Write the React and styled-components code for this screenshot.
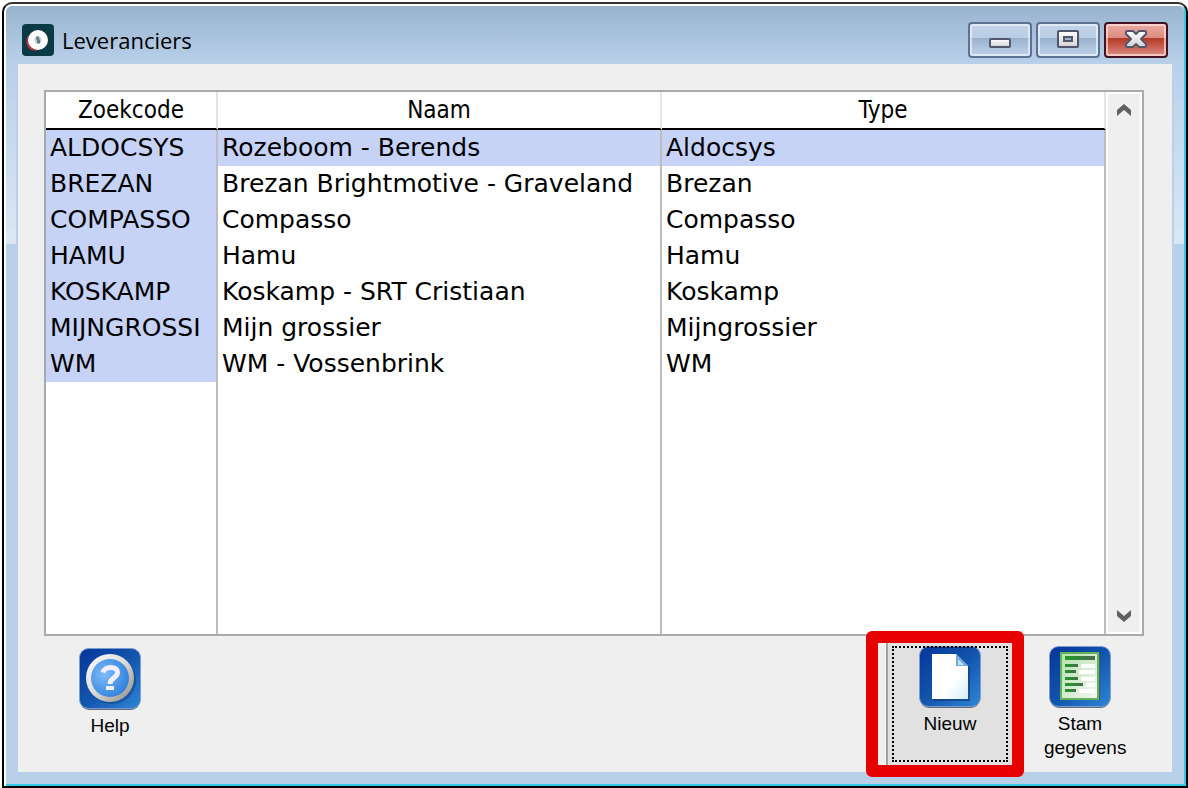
import React, { useState } from 'react'
import styled, { createGlobalStyle } from 'styled-components';

const suppliers = [
    { code: "ALDOCSYS", name: "Rozeboom - Berends", type: "Aldocsys" },
    { code: "BREZAN", name: "Brezan Brightmotive - Graveland", type: "Brezan" },
    { code: "COMPASSO", name: "Compasso", type: "Compasso" },
    { code: "HAMU", name: "Hamu", type: "Hamu" },
    { code: "KOSKAMP", name: "Koskamp - SRT Cristiaan", type: "Koskamp" },
    { code: "MIJNGROSSI", name: "Mijn grossier", type: "Mijngrossier" },
    { code: "WM", name: "WM - Vossenbrink", type: "WM" },
];

function AppLogo() {
    return (
        <svg width="32" height="32" viewBox="0 0 32 32" aria-hidden="true">
            <rect width="32" height="32" rx="4" fill="#0b3a47" />
            <path d="M6 12 C3 16 4 23 9 26 L15 27 L13 12 Z" fill="#b5323a" />
            <circle cx="16" cy="16" r="10" fill="#fff" />
            <circle cx="16" cy="16" r="3.5" fill="#c3ced3" />
            <path d="M14 12.5 h3 v3 h1 v4 h-3 v-4 h-1 z" fill="#5f8088" />
        </svg>
    )
}

function MinimizeGlyph() {
    return (
        <svg width="22" height="36" viewBox="0 0 22 36" aria-hidden="true">
            <rect x="1" y="17" width="20" height="8" rx="1" fill="url(#glyph)" stroke="#50576b" strokeWidth="2" />
        </svg>
    )
}

function MaximizeGlyph() {
    return (
        <svg width="22" height="36" viewBox="0 0 22 36" aria-hidden="true">
            <rect x="1" y="9" width="20" height="16" rx="1" fill="url(#glyph)" stroke="#50576b" strokeWidth="2" />
            <rect x="7" y="15" width="8" height="4" fill="#9db5d0" stroke="#50576b" strokeWidth="2" />
        </svg>
    )
}

function CloseGlyph() {
    return (
        <svg width="22" height="36" viewBox="0 0 22 36" aria-hidden="true">
            <path
                d="M2 9 H8 L11 12 L14 9 H20 L21 10 V12 L16 17 L21 22 V24 L20 25 H14 L11 22 L8 25 H2 L1 24 V22 L6 17 L1 12 V10 Z"
                fill="url(#glyph)"
                stroke="#50576b"
                strokeWidth="2"
                strokeLinejoin="round"
            />
        </svg>
    )
}

// gradients shared by all the drawings on the page
function Gradients() {
    return (
        <Defs aria-hidden="true">
            <defs>
                <linearGradient id="glyph" x1="0" y1="0" x2="0" y2="1">
                    <stop offset="0" stopColor="#fff" />
                    <stop offset="1" stopColor="#d2d2d2" />
                </linearGradient>
                <linearGradient id="tile" x1="0" y1="0" x2="1" y2="1">
                    <stop offset="0" stopColor="#06359a" />
                    <stop offset="0.5" stopColor="#1254ac" />
                    <stop offset="1" stopColor="#2f86d6" />
                </linearGradient>
                <linearGradient id="ring" x1="0" y1="0" x2="1" y2="1">
                    <stop offset="0" stopColor="#fff" />
                    <stop offset="0.5" stopColor="#dcdad6" />
                    <stop offset="1" stopColor="#8c8984" />
                </linearGradient>
                <radialGradient id="disc" cx="0.35" cy="0.4" r="0.7">
                    <stop offset="0" stopColor="#7fbcf6" />
                    <stop offset="1" stopColor="#2d7fdc" />
                </radialGradient>
                <linearGradient id="paper" x1="0" y1="0" x2="1" y2="1">
                    <stop offset="0.6" stopColor="#fff" />
                    <stop offset="1" stopColor="#d5ecfa" />
                </linearGradient>
                <linearGradient id="sheet" x1="0" y1="0" x2="1" y2="1">
                    <stop offset="0" stopColor="#b5e0ac" />
                    <stop offset="1" stopColor="#f3f8f2" />
                </linearGradient>
                <linearGradient id="line" x1="0" y1="0" x2="1" y2="0">
                    <stop offset="0" stopColor="#1f9a25" />
                    <stop offset="1" stopColor="#4d6b4e" />
                </linearGradient>
            </defs>
        </Defs>
    )
}

function Tile({ children }) {
    return (
        <svg width="62" height="62" viewBox="0 0 62 62" aria-hidden="true">
            <rect x="1" y="2" width="60" height="60" rx="9" fill="#5d6a80" />
            <rect x="0.500" y="0.500" width="61" height="60" rx="9" fill="url(#tile)" stroke="#7d9dd0" />
            {children}
        </svg>
    )
}

function HelpIcon() {
    return (
        <Tile>
            <circle cx="33" cy="32" r="24" fill="#0a3c86" opacity="0.5" />
            <circle cx="31" cy="30" r="24" fill="url(#ring)" />
            <circle cx="31" cy="30" r="19" fill="url(#disc)" />
            <path d="M24 24.500 C25 18 38.500 17.500 38.500 24.500 C38.500 30 31 29.500 31 36" fill="none" stroke="#f3f0fc" strokeWidth="5" />
            <rect x="27" y="38" width="8" height="4" fill="#f3f0fc" />
        </Tile>
    )
}

function NewIcon() {
    return (
        <Tile>
            <path d="M15 10 H39 L51 22 V55 H15 Z" fill="#0b3267" opacity="0.55" />
            <path d="M13 8 H37 L49 20 V53 H13 Z" fill="url(#paper)" />
            <path d="M37 8 L49 20 H37 Z" fill="#6fa9d9" />
            <path d="M39 13 L45 19 H39 Z" fill="#b8e2f6" />
        </Tile>
    )
}

function SheetIcon() {
    const lines = [
        [18, 13], [24, 11], [31, 13], [37, 18], [43, 11],
    ];
    return (
        <Tile>
            <rect x="13" y="8" width="38" height="46" fill="#4b5f63" />
            <rect x="12" y="7" width="37" height="46" fill="url(#sheet)" stroke="#64b15b" strokeWidth="2" />
            <rect x="16" y="10" width="30" height="4" fill="url(#line)" />
            {lines.map(([y, width]) => (
                <g key={y}>
                    <rect x="16" y={y} width={width} height="3" fill="url(#line)" />
                    <rect x={width + 19} y={y} width={27 - width} height="4" fill="#fff" />
                </g>
            ))}
        </Tile>
    )
}

function Chevron({ down }) {
    return (
        <svg width="14" height="12" viewBox="0 0 14 12" aria-hidden="true">
            <path d={down ? "M0 0 L7 6 L14 0 V6 L7 12 L0 6 Z" : "M0 12 L7 6 L14 12 V6 L7 0 L0 6 Z"} fill="#606060" />
        </svg>
    )
}

function App() {
    const [selected, setSelected] = useState("ALDOCSYS");
    return (
        <Window>
            <GlobalStyle />
            <Gradients />
            <TitleBar>
                <AppLogo />
                <Title>Leveranciers</Title>
                <WindowButton aria-label="Minimaliseren"><MinimizeGlyph /></WindowButton>
                <WindowButton aria-label="Maximaliseren"><MaximizeGlyph /></WindowButton>
                <WindowButton aria-label="Sluiten" $close><CloseGlyph /></WindowButton>
            </TitleBar>
            <Frame>
                <Edge />
                <Content>
                    <Browse>
                        <Table>
                            <thead>
                                <tr>
                                    <HeadCell $first>Zoekcode</HeadCell>
                                    <HeadCell>Naam</HeadCell>
                                    <HeadCell>Type</HeadCell>
                                </tr>
                            </thead>
                            <tbody>
                                {suppliers.map((supplier) => (
                                    <Row key={supplier.code} $selected={supplier.code === selected} onClick={() => setSelected(supplier.code)}>
                                        <Cell $code>{supplier.code}</Cell>
                                        <Cell>{supplier.name}</Cell>
                                        <Cell>{supplier.type}</Cell>
                                    </Row>
                                ))}
                                <tr>
                                    <Filler />
                                    <Filler />
                                    <Filler />
                                </tr>
                            </tbody>
                        </Table>
                        <ScrollBar>
                            <ScrollButton aria-label="Omhoog"><Chevron /></ScrollButton>
                            <ScrollButton aria-label="Omlaag"><Chevron down /></ScrollButton>
                        </ScrollBar>
                    </Browse>
                    <Toolbar>
                        <HelpButton>
                            <HelpIcon />
                            <Label>Help</Label>
                        </HelpButton>
                        <Marked>
                            <NewButton>
                                <NewIcon />
                                <Label>Nieuw</Label>
                            </NewButton>
                        </Marked>
                        <DataButton>
                            <SheetIcon />
                            <Label>Stam gegevens</Label>
                        </DataButton>
                    </Toolbar>
                </Content>
                <Edge />
            </Frame>
        </Window>
    )
}

const GlobalStyle = createGlobalStyle`
    *{
        box-sizing:border-box;
    }
    body{
        margin:0;
        background:white;
    }
    button{
        margin:0;
        padding:0;
        border:none;
        background:none;
        color:black;
    }
    svg{
        display:block;
        flex-shrink:0;
    }
`

const Defs = styled.svg`
    position:absolute;
    width:0;
    height:0;
`

const Window = styled.div`
    display:flex;
    flex-direction:column;
    min-height:calc(100vh - 2px);
    margin:2px 0 0 2px;
    border:2px solid black;
    border-top-color:#333;
    border-radius:10px 10px 0 0;
    background:#b9d0e9;
    box-shadow:inset 2px 2px 0 white, inset -2px -2px 0 #35cbe8;
    padding:2px;
`

const TitleBar = styled.header`
    display:flex;
    align-items:center;
    gap:4px;
    height:58px;
    padding:16px 16px 6px;
    border-radius:6px 6px 0 0;
    background:linear-gradient(#99b3cf, #b9d0e9);
`

const Title = styled.h1`
    flex:1;
    margin:0;
    padding-left:4px;
    font:400 22px/32px "Open Sans", "Noto Sans", sans-serif;
    color:black;
`

const WindowButton = styled.button`
    display:flex;
    align-items:center;
    justify-content:center;
    width:64px;
    height:36px;
    border:2px solid ${(props) => (props.$close ? "#431420" : "#5f7190")};
    border-radius:4px;
    background:${(props) => (props.$close
        ? "linear-gradient(#eaada3, #dc8c80 44%, #b23c2a 45%, #c04f3e 60%, #dc8f84)"
        : "linear-gradient(#c3d4e9, #bacde4 44%, #98b1cd 45%, #a5bbd6 60%, #bdd0e7)")};
    box-shadow:inset 0 0 0 2px ${(props) => (props.$close ? "rgba(255,225,220,0.7)" : "rgba(235,243,252,0.7)")};
`

const Frame = styled.div`
    display:flex;
    flex:1;
    padding-bottom:12px;
`

const Edge = styled.div`
    width:12px;
    background:linear-gradient(#b9d0e9, #dbe8f4) no-repeat;
    background-size:10px 180px;
    &:last-child{
        background-position:right top;
    }
`

const Content = styled.main`
    display:flex;
    flex-direction:column;
    flex:1;
    min-width:0;
    padding-top:26px;
    background:#efefef;
`

const Browse = styled.div`
    display:flex;
    flex:1;
    margin:0 28px 0 26px;
    border:2px solid #a9aab0;
    background:white;
`

const Table = styled.table`
    flex:1;
    width:100%;
    min-width:0;
    table-layout:fixed;
    border-collapse:separate;
    border-spacing:0;
    color:black;
`

const HeadCell = styled.th`
    width:${(props) => (props.$first ? "172px" : "auto")};
    height:38px;
    padding:0;
    border-right:2px solid #e4e4e4;
    border-bottom:2px solid black;
    font:400 24px/36px "DejaVu Sans Condensed", "DejaVu Sans", sans-serif;
`

const Cell = styled.td`
    height:36px;
    padding:0 4px;
    border-right:2px solid #bdbdbd;
    background:${(props) => (props.$code ? "#c6d3f7" : "transparent")};
    font:400 25px/36px "DejaVu Sans", sans-serif;
    white-space:nowrap;
`

const Row = styled.tr`
    height:36px;
    background:${(props) => (props.$selected ? "#c6d3f7" : "white")};
`

const Filler = styled.td`
    padding:0;
    border-right:2px solid #bdbdbd;
`

const ScrollBar = styled.div`
    display:flex;
    flex-direction:column;
    justify-content:space-between;
    flex-shrink:0;
    width:36px;
    border:2px solid white;
    background:#efefef;
`

const ScrollButton = styled.button`
    display:flex;
    align-items:center;
    justify-content:center;
    height:32px;
`

const Toolbar = styled.div`
    display:flex;
    height:136px;
    padding:6px 56px 6px 26px;
`

const ToolButton = styled.button`
    display:flex;
    flex-direction:column;
    align-items:center;
    height:124px;
    padding-top:4px;
`

const HelpButton = styled(ToolButton)`
    width:132px;
    margin-right:auto;
    padding-top:6px;
`

const NewButton = styled(ToolButton)`
    position:relative;
    width:126px;
    border-left:2px solid #a0a0a0;
    background:#e1e1e1;
    &::after{
        content:"";
        position:absolute;
        inset:4px;
        border:2px dotted black;
    }
`

const DataButton = styled(ToolButton)`
    width:72px;
    margin-left:32px;
`

// red box laid over the button and the frame around it
const Marked = styled.div`
    position:relative;
    &::after{
        content:"";
        position:absolute;
        inset:-11px -12px -11px -20px;
        border:12px solid #e60000;
        border-radius:6px;
        pointer-events:none;
    }
`

const Label = styled.span`
    width:100%;
    margin-top:4px;
    font:400 19px/24px "Liberation Sans", Arial, sans-serif;
    text-align:center;
`

export default App
